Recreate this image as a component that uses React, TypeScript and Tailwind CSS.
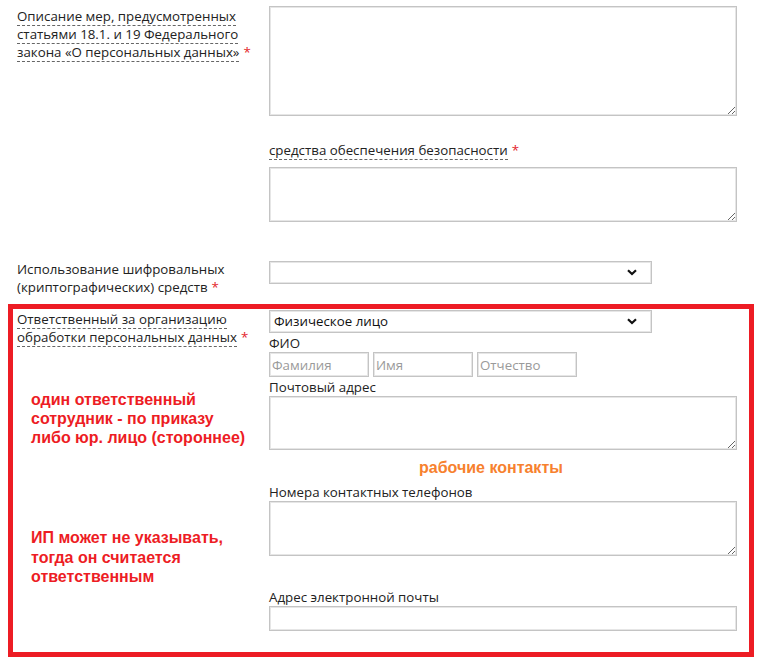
import { ReactNode } from "react";

const labelFont = { fontFamily: '"Open Sans", "DejaVu Sans", sans-serif' };
const noteFont = { fontFamily: '"Liberation Sans", Arial, sans-serif' };

const boxCls =
  "block bg-white border border-[#c4c4c4] shadow-[inset_0_0_0_1px_#e6e6e6] outline-none";

function Dashed({ children, req }: { children: ReactNode; req?: boolean }) {
  return (
    <>
      <span className="border-b border-dashed border-[#666] [box-decoration-break:clone]">
        {children}
      </span>
      {req && <span className="text-[#e3242b] ml-1">*</span>}
    </>
  );
}

function Select({ value }: { value: string }) {
  return (
    <div className="relative w-[383px] h-[23px]">
      <select
        className={`${boxCls} w-full h-full appearance-none pl-[4px] text-[13.3px] text-[#111]`}
        defaultValue={value}
      >
        <option value={value}>{value}</option>
      </select>
      <svg
        className="absolute right-[15px] top-[8px] pointer-events-none"
        width="10"
        height="7"
        viewBox="0 0 10 7"
      >
        <path d="M1 1.2 L5 5 L9 1.2" fill="none" stroke="#111" strokeWidth="2.2" />
      </svg>
    </div>
  );
}

function Area({ h }: { h: string }) {
  return <textarea className={`${boxCls} w-full ${h}`} />;
}

export default function App() {
  return (
    <div
      className="w-[760px] h-[662px] bg-white text-[13.3px] leading-[18px] text-[#222] overflow-hidden"
      style={labelFont}
    >
      <div className="pl-[17px] pt-[6px]">
        {/* описание мер + средства обеспечения */}
        <div className="grid grid-cols-[252px_468px]">
          <div className="pt-px pr-2">
            <Dashed req>
              Описание мер, предусмотренных статьями 18.1. и 19 Федерального
              закона «О персональных данных»
            </Dashed>
          </div>
          <div>
            <Area h="h-[110px]" />
            <div className="mt-[25px] mb-[8px]">
              <Dashed req>средства обеспечения безопасности</Dashed>
            </div>
            <Area h="h-[55px]" />
          </div>
        </div>

        {/* шифровальные средства */}
        <div className="grid grid-cols-[252px_468px] mt-[39px]">
          <div className="-mt-px">
            Использование шифровальных (криптографических) средств
            <span className="text-[#e3242b] ml-1">*</span>
          </div>
          <Select value="" />
        </div>
      </div>

      {/* ответственный */}
      <div className="ml-[8px] w-[746px] h-[353px] mt-[8px] border-[5px] border-[#ed1c24] pl-[4px] pt-px grid grid-cols-[252px_468px]">
        <div>
          <div className="pr-2">
            <Dashed req>
              Ответственный за организацию обработки персональных данных
            </Dashed>
          </div>
          <div
            className="ml-[14px] mt-[44px] text-[16px] leading-[19px] font-bold text-[#ed1c24]"
            style={noteFont}
          >
            один ответственный
            <br />
            сотрудник - по приказу
            <br />
            либо юр. лицо (стороннее)
          </div>
          <div
            className="ml-[14px] mt-[81px] text-[16px] leading-[19.5px] font-bold text-[#ed1c24]"
            style={noteFont}
          >
            ИП может не указывать,
            <br />
            тогда он считается
            <br />
            ответственным
          </div>
        </div>

        <div className="leading-[17px]">
          <Select value="Физическое лицо" />
          <div className="mt-[2px]">ФИО</div>
          <div className="flex gap-[4px]">
            {["Фамилия", "Имя", "Отчество"].map((p) => (
              <input
                key={p}
                placeholder={p}
                className={`${boxCls} w-[100px] h-[25px] px-[2px] text-[13.3px] placeholder:text-[#9a9a9a]`}
              />
            ))}
          </div>
          <div className="mt-[2px]">Почтовый адрес</div>
          <Area h="h-[54px]" />
          <div
            className="mt-[9px] mb-[7px] pl-[150px] text-[16px] leading-[18px] font-bold text-[#f7812e]"
            style={noteFont}
          >
            рабочие контакты
          </div>
          <div>Номера контактных телефонов</div>
          <Area h="h-[55px]" />
          <div className="mt-[33px]">Адрес электронной почты</div>
          <input className={`${boxCls} w-full h-[25px]`} />
        </div>
      </div>
    </div>
  );
}
